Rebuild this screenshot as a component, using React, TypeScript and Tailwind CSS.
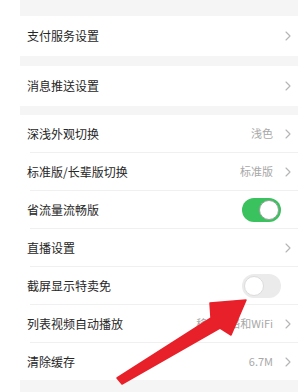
import React from "react";

const font = { fontFamily: '"Noto Sans CJK SC", "Noto Sans", sans-serif' };

function Chevron() {
  return (
    <svg width="6" height="10" viewBox="0 0 6 10" className="shrink-0">
      <polyline points="1,1 5,5 1,9" fill="none" stroke="#b5b5b5" strokeWidth="1.1" strokeLinecap="round" strokeLinejoin="round" />
    </svg>
  );
}

function Toggle({ on }: { on: boolean }) {
  return on ? (
    <div className="flex h-[24px] w-[39px] items-center justify-end rounded-full bg-[#39c25d] p-[2px]">
      <div className="h-[20px] w-[20px] rounded-full border border-[#9aa39c] bg-white" />
    </div>
  ) : (
    <div className="flex h-[24px] w-[39px] items-center justify-start rounded-full bg-[#ebebeb] p-[2px]">
      <div className="h-[20px] w-[20px] rounded-full border border-[#dcdcdc] bg-white" />
    </div>
  );
}

function Row({
  label,
  value,
  chevron = true,
  toggle,
  h = "h-[37px]",
}: {
  label: string;
  value?: string;
  chevron?: boolean;
  toggle?: boolean;
  h?: string;
}) {
  return (
    <div className={`flex ${h} items-center bg-white pl-[7px] pr-[7px]`}>
      <span className="flex-1 text-[12px] leading-none text-[#262626]">{label}</span>
      {value && <span className="mr-[12px] text-[11px] leading-none text-[#a8a8a8]">{value}</span>}
      {toggle !== undefined ? (
        <div className="mr-[10px]">
          <Toggle on={toggle} />
        </div>
      ) : (
        chevron && <Chevron />
      )}
    </div>
  );
}

function Sep() {
  return (
    <div className="bg-white">
      <div className="ml-[10px] h-px bg-[#f0f0f0]" />
    </div>
  );
}

export default function App() {
  return (
    <div className="relative h-[392px] w-[305px] overflow-hidden bg-white" style={font}>
      <div className="ml-[20px] flex w-[278px] flex-col">
        <div className="h-[16px] bg-[#f5f5f5]" />
        <Row label="支付服务设置" h="h-[40px]" />
        <div className="h-[10px] bg-[#f5f5f5]" />
        <Row label="消息推送设置" h="h-[40px]" />
        <div className="h-[9px] bg-[#f5f5f5]" />
        <Row label="深浅外观切换" value="浅色" />
        <Sep />
        <Row label="标准版/长辈版切换" value="标准版" />
        <Sep />
        <Row label="省流量流畅版" toggle={true} />
        <Sep />
        <Row label="直播设置" />
        <Sep />
        <Row label="截屏显示特卖免" toggle={false} />
        <Sep />
        <Row label="列表视频自动播放" value="移动网络和WiFi" />
        <Sep />
        <Row label="清除缓存" value="6.7M" />
        <div className="h-[20px] bg-[#f5f5f5]" />
      </div>
      <svg className="pointer-events-none absolute left-0 top-0" width="305" height="392" viewBox="0 0 305 392">
        <polygon
          points="117,378 211,318 210,303 246,300 231,335 220,328 122,384"
          fill="#e8202a"
          stroke="#e8202a"
          strokeWidth="1.5"
          strokeLinejoin="round"
        />
      </svg>
    </div>
  );
}
